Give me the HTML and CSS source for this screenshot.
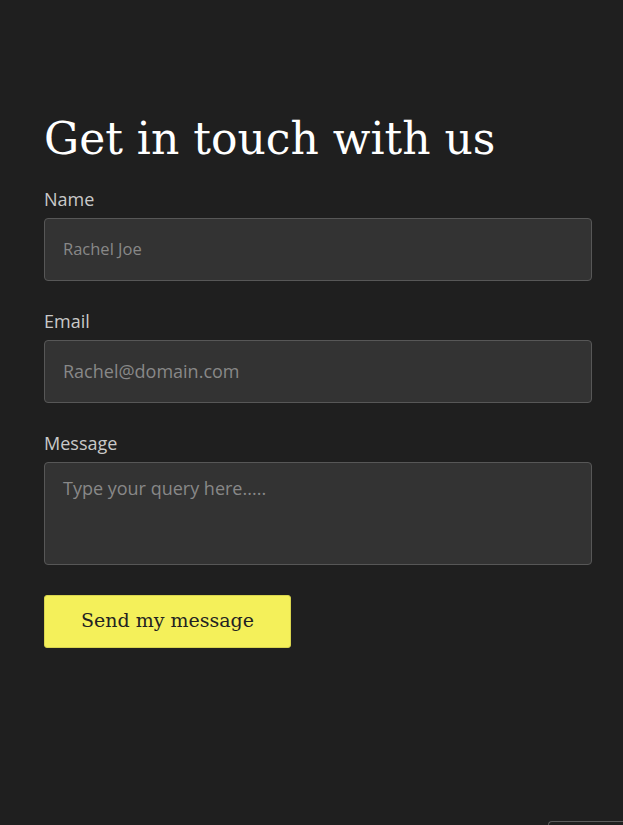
FILE: index.html
```html
<!DOCTYPE html>
<html lang="en">
<head>
<meta charset="utf-8">
<title>Contact</title>
<link rel="stylesheet" href="styles.css">
</head>
<body>
<main class="contact">
  <h1 class="title">Get in touch with us</h1>
  <form class="form">
    <div class="field">
      <label class="label" for="name">Name</label>
      <input class="input input-small" id="name" type="text" placeholder="Rachel Joe">
    </div>
    <div class="field">
      <label class="label" for="email">Email</label>
      <input class="input" id="email" type="email" placeholder="Rachel@domain.com">
    </div>
    <div class="field">
      <label class="label" for="message">Message</label>
      <textarea class="input textarea" id="message" placeholder="Type your query here....."></textarea>
    </div>
    <button class="btn" type="button">Send my message</button>
  </form>
</main>
<div class="corner-box"></div>
</body>
</html>
```

FILE: styles.css
```css
html, body {
  margin: 0;
  padding: 0;
  background: #1f1f1f;
  height: 100%;
  overflow: hidden;
}

body {
  position: relative;
}

.contact {
  width: 548px;
  padding: 111px 0 0 44px;
}

.title {
  margin: 0 0 20px;
  font-family: "DejaVu Serif", serif;
  font-weight: normal;
  font-size: 44px;
  line-height: 56px;
  color: #ffffff;
}

.form {
  display: flex;
  flex-direction: column;
  gap: 28px;
}

.field {
  display: flex;
  flex-direction: column;
  gap: 7px;
}

.label {
  font-family: "Open Sans", sans-serif;
  font-size: 18px;
  line-height: 24px;
  color: #c9c9c9;
}

.input {
  box-sizing: border-box;
  width: 548px;
  height: 63px;
  margin: 0;
  padding: 0 18px 2px;
  background: #333333;
  border: 1px solid #575757;
  border-radius: 4px;
  font-family: "Open Sans", sans-serif;
  font-size: 18px;
  color: #e0e0e0;
  outline: none;
}

.input-small {
  font-size: 16.5px;
  padding-bottom: 3px;
}

.input::placeholder {
  color: #888888;
  opacity: 1;
}

.textarea {
  display: block;
  height: 103px;
  padding: 13px 18px 11px;
  line-height: normal;
  resize: none;
}

.btn {
  margin-top: 2px;
  align-self: flex-start;
  box-sizing: border-box;
  width: 247px;
  height: 53px;
  padding: 0 0 3px;
  background: #f4f05a;
  border: 1px solid #d8d44e;
  border-radius: 3px;
  font-family: "DejaVu Serif", serif;
  font-size: 19px;
  color: #222222;
  cursor: pointer;
}

.corner-box {
  position: absolute;
  left: 548px;
  right: 0;
  bottom: 0;
  height: 3px;
  border-top: 1px solid #5c5c5c;
  border-left: 1px solid #5c5c5c;
  border-top-left-radius: 4px;
  background: #1f1f1f;
}
```
